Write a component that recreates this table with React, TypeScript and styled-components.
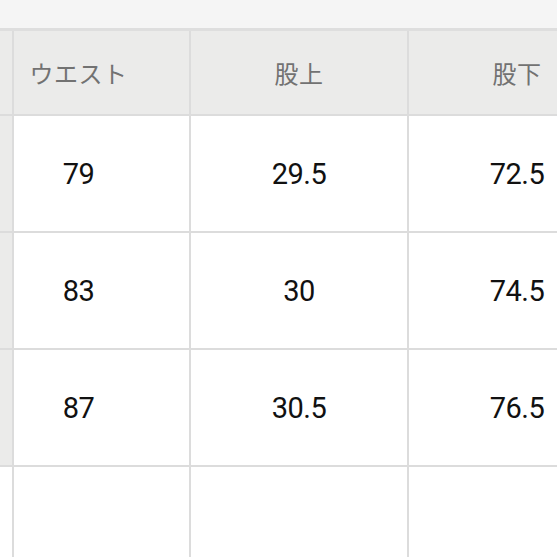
import React from 'react';
import styled, { createGlobalStyle } from 'styled-components';

const GlobalStyle = createGlobalStyle`
  html, body {
    margin: 0;
    padding: 0;
    background: #ffffff;
    overflow: hidden;
  }
`;

const Page = styled.div`
  width: 557px;
  height: 557px;
  overflow: hidden;
  background: #ffffff;
  font-family: Roboto, 'Noto Sans CJK JP', sans-serif;
`;

const TopBar = styled.div`
  height: 28px;
  background: #f5f5f5;
  border-bottom: 3px solid #dedede;
`;

const Table = styled.div`
  display: grid;
  grid-template-columns: 12px 175px 216px 216px;
  grid-template-rows: 83px repeat(4, 115px);
  gap: 2px;
  background: #dcdcdc;
  width: 625px;
`;

const Cell = styled.div<{ $head?: boolean; $side?: boolean; $shift?: boolean }>`
  display: flex;
  align-items: center;
  justify-content: center;
  background: ${(p) => (p.$head || p.$side ? '#ebebea' : '#ffffff')};
  color: ${(p) => (p.$head ? '#727272' : '#111111')};
  font-family: ${(p) =>
    p.$head ? "'Noto Sans CJK JP', sans-serif" : "Roboto, 'Noto Sans CJK JP', sans-serif"};
  font-size: ${(p) => (p.$head ? '24px' : '29px')};
  letter-spacing: ${(p) => (p.$head ? '0.5px' : '-0.5px')};
  padding-right: ${(p) => (p.$shift ? '46px' : '0')};
`;

const header = ['ウエスト', '股上', '股下'];
const rows = [
  ['79', '29.5', '72.5'],
  ['83', '30', '74.5'],
  ['87', '30.5', '76.5'],
  ['', '', ''],
];

export default function App() {
  return (
    <Page>
      <GlobalStyle />
      <TopBar />
      <Table>
        <Cell $side />
        {header.map((h, i) => (
          <Cell key={h} $head $shift={i === 0}>
            {h}
          </Cell>
        ))}
        {rows.map((r, ri) => (
          <React.Fragment key={ri}>
            <Cell $side={ri < 3} />
            {r.map((v, ci) => (
              <Cell key={ci} $shift={ci === 0}>
                {v}
              </Cell>
            ))}
          </React.Fragment>
        ))}
      </Table>
    </Page>
  );
}
